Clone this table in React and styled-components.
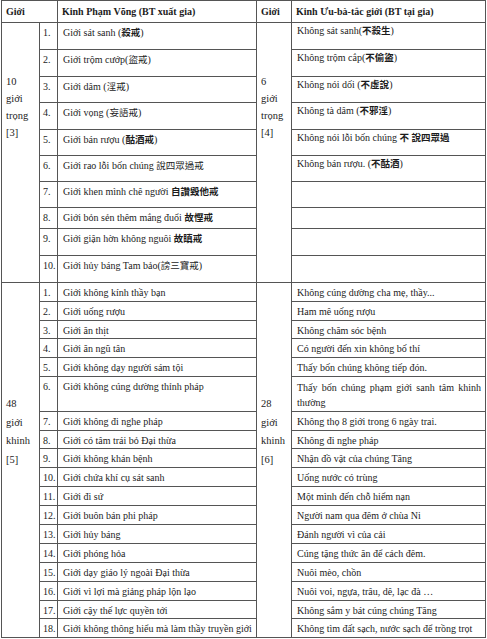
import React from 'react';
import styled, { createGlobalStyle } from 'styled-components';

const GlobalStyle = createGlobalStyle`
  html, body {
    margin: 0;
    padding: 0;
    background: #ffffff;
  }
  body {
    font-family: "Liberation Serif", "Times New Roman", serif;
    color: #1c1c1c;
  }
`;

const Page = styled.div`
  width: 487px;
  height: 639px;
  overflow: hidden;
  background: #ffffff;
  padding: 0 0 0 1px;
  box-sizing: border-box;
`;

const Table = styled.table`
  width: 484px;
  table-layout: fixed;
  border-collapse: collapse;
  border: 1px solid #333;
  font-size: 10px;
  line-height: 13px;
`;

const Row = styled.tr`
  height: ${(p) => p.$h}px;
`;

const Th = styled.th`
  border: 1px solid #555;
  text-align: left;
  vertical-align: middle;
  font-weight: bold;
  padding: 0 4px;
  white-space: nowrap;
`;

const LabelCell = styled.td`
  border: 1px solid #555;
  vertical-align: top;
  padding: ${(p) => p.$top}px 3px 0 4px;
  line-height: ${(p) => p.$lh}px;
  font-size: 10.5px;
`;

const NumCell = styled.td`
  border: 1px solid #555;
  vertical-align: top;
  padding: 3px 0 0 3px;
  white-space: nowrap;
`;

const TextCell = styled.td`
  border: 1px solid #555;
  vertical-align: top;
  padding: ${(p) => (p.$shift ? 1 : 3)}px 4px 0 5px;
  white-space: ${(p) => (p.$wrap ? 'normal' : 'nowrap')};
  text-align: ${(p) => (p.$wrap ? 'justify' : 'left')};
  line-height: ${(p) => (p.$wrap ? '15px' : '13px')};
`;

const Han = styled.span`
  font-family: "Noto Sans CJK TC", "Noto Sans CJK SC", sans-serif;
  font-size: 9.5px;
  font-weight: ${(p) => (p.$bold ? 700 : 400)};
`;

const hanRun = /([\u3400-\u9fff]+)/;

const Txt = ({ children, bold }) => (
  <>
    {String(children)
      .split(hanRun)
      .map((part, i) =>
        hanRun.test(part) ? (
          <Han key={i} $bold={bold}>
            {part}
          </Han>
        ) : (
          part
        )
      )}
  </>
);

const heavy = [
  { n: '1.', l: 'Giới sát sanh (殺戒)', r: 'Không sát sanh(不殺生)', h: 27, lb: true },
  { n: '2.', l: 'Giới trộm cướp(盜戒)', r: 'Không trộm cắp(不偷盜)', h: 27 },
  { n: '3.', l: 'Giới dâm (淫戒)', r: 'Không nói dối (不虛說)', h: 26 },
  { n: '4.', l: 'Giới vọng (妄語戒)', r: 'Không tà dâm (不邪淫)', h: 27 },
  { n: '5.', l: 'Giới bán rượu (酤酒戒)', r: 'Không nói lỗi bốn chúng 不 說四眾過', h: 26, lb: true },
  { n: '6.', l: 'Giới rao lỗi bốn chúng 說四眾過戒', r: 'Không bán rượu. (不酤酒)', h: 26 },
  { n: '7.', l: 'Giới khen mình chê người 自讚毀他戒', r: '', h: 26, lb: true },
  { n: '8.', l: 'Giới bỏn sẻn thêm mắng đuổi 故慳戒', r: '', h: 21, lb: true },
  { n: '9.', l: 'Giới giận hờn không nguôi 故瞋戒', r: '', h: 27, lb: true },
  { n: '10.', l: 'Giới hủy báng Tam bảo(謗三寶戒)', r: '', h: 27 },
];

const light = [
  { n: '1.', l: 'Giới không kính thầy bạn', r: 'Không cúng dường cha mẹ, thầy...', h: 19 },
  { n: '2.', l: 'Giới uống rượu', r: 'Ham mê uống rượu', h: 19 },
  { n: '3.', l: 'Giới ăn thịt', r: 'Không chăm sóc bệnh', h: 18 },
  { n: '4.', l: 'Giới ăn ngũ tân', r: 'Có người đến xin không bố thí', h: 19 },
  { n: '5.', l: 'Giới không dạy người sám tội', r: 'Thấy bốn chúng không tiếp đón.', h: 19 },
  { n: '6.', l: 'Giới không cúng dường thỉnh pháp', r: 'Thấy bốn chúng phạm giới sanh tâm khinh thường', h: 35, wrap: true },
  { n: '7.', l: 'Giới không đi nghe pháp', r: 'Không thọ 8 giới trong 6 ngày trai.', h: 19 },
  { n: '8.', l: 'Giới có tâm trái bỏ Đại thừa', r: 'Không đi nghe pháp', h: 18 },
  { n: '9.', l: 'Giới không khán bệnh', r: 'Nhận đồ vật của chúng Tăng', h: 19 },
  { n: '10.', l: 'Giới chứa khí cụ sát sanh', r: 'Uống nước có trùng', h: 19 },
  { n: '11.', l: 'Giới đi sứ', r: 'Một mình đến chỗ hiểm nạn', h: 19 },
  { n: '12.', l: 'Giới buôn bán phi pháp', r: 'Người nam qua đêm ở chùa Ni', h: 19 },
  { n: '13.', l: 'Giới hủy báng', r: 'Đánh người vì của cải', h: 19 },
  { n: '14.', l: 'Giới phóng hỏa', r: 'Cúng tặng thức ăn để cách đêm.', h: 19 },
  { n: '15.', l: 'Giới dạy giáo lý ngoài Đại thừa', r: 'Nuôi mèo, chồn', h: 19 },
  { n: '16.', l: 'Giới vì lợi mà giảng pháp lộn lạo', r: 'Nuôi voi, ngựa, trâu, dê, lạc đà …', h: 19 },
  { n: '17.', l: 'Giới cậy thế lực quyền tới', r: 'Không sắm y bát cúng chúng Tăng', h: 18 },
  { n: '18.', l: 'Giới không thông hiểu mà làm thầy truyền giới', r: 'Không tìm đất sạch, nước sạch để trồng trọt', h: 19 },
];

const Label = ({ lines, rows, top, lh }) => (
  <LabelCell rowSpan={rows} $top={top} $lh={lh}>
    {lines.map((t, i) => (
      <div key={i}>{t}</div>
    ))}
  </LabelCell>
);

const Section = ({ data, left, right, top, lh, shift }) =>
  data.map((row, i) => (
    <Row key={row.n} $h={row.h}>
      {i === 0 && <Label lines={left} rows={data.length} top={top} lh={lh} />}
      <NumCell>{row.n}</NumCell>
      <TextCell>
        <Txt bold={row.lb}>{row.l}</Txt>
      </TextCell>
      {i === 0 && <Label lines={right} rows={data.length} top={top} lh={lh} />}
      <TextCell $wrap={row.wrap} $shift={shift}>
        <Txt bold>{row.r}</Txt>
      </TextCell>
    </Row>
  ));

export default function App() {
  return (
    <Page>
      <GlobalStyle />
      <Table>
        <colgroup>
          <col style={{ width: 38 }} />
          <col style={{ width: 18 }} />
          <col style={{ width: 199 }} />
          <col style={{ width: 35 }} />
          <col style={{ width: 194 }} />
        </colgroup>
        <tbody>
          <Row $h={22}>
            <Th colSpan={2}>Giới</Th>
            <Th>Kinh Phạm Võng (BT xuất gia)</Th>
            <Th>Giới</Th>
            <Th>Kinh Ưu-bà-tắc giới (BT tại gia)</Th>
          </Row>
          <Section
            data={heavy}
            left={['10', 'giới', 'trọng', '[3]']}
            right={['6', 'giới', 'trọng', '[4]']}
            top={50}
            lh={17}
            shift
          />
          <Section
            data={light}
            left={['48', 'giới', 'khinh', '[5]']}
            right={['28', 'giới', 'khinh', '[6]']}
            top={112}
            lh={18.5}
          />
        </tbody>
      </Table>
    </Page>
  );
}
